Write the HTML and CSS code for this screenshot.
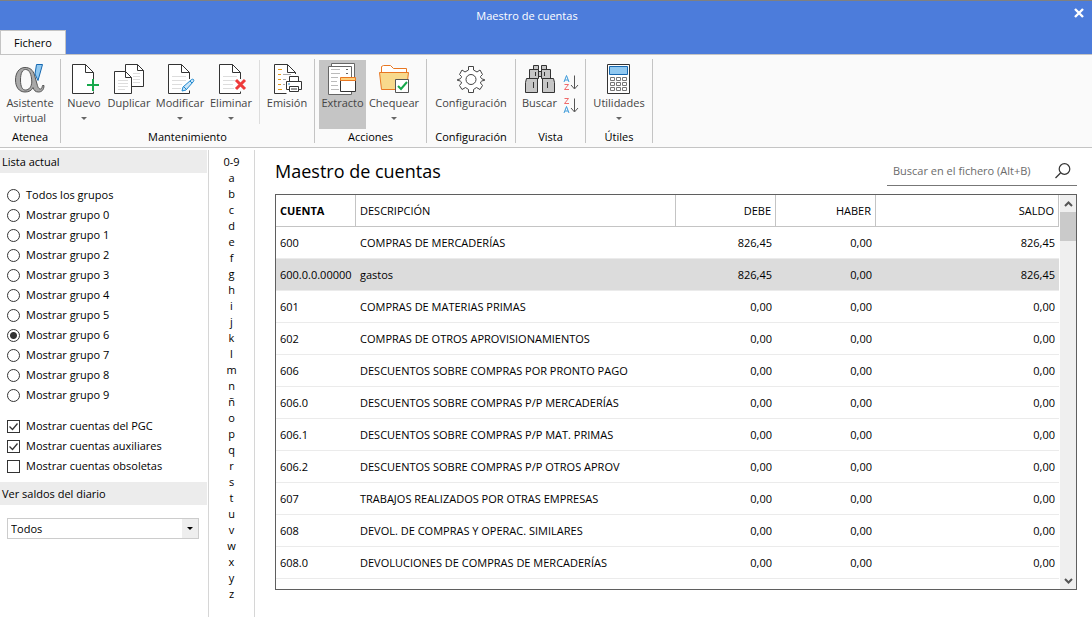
FILE: index.html
```html
<!DOCTYPE html>
<html lang="es">
<head>
<meta charset="utf-8">
<title>Maestro de cuentas</title>
<meta name="viewport" content="width=device-width, initial-scale=1">
<link rel="stylesheet" href="styles.css">
</head>
<body>
<header class="titlebar">
  <div class="caption">Maestro de cuentas</div>
  <button class="close" aria-label="Cerrar"><svg width="10" height="10" viewBox="0 0 10 10"><path d="M1 1L9 9M9 1L1 9" stroke="#fff" stroke-width="2.4"/></svg></button>
  <button class="tab">Fichero</button>
</header>

<nav class="ribbon">
  <section class="group group-atenea">
    <div class="tools">
      <button class="tool">
        <svg width="34" height="33" viewBox="0 0 34 33"><path fill-rule="evenodd" d="M12 5.500C17 5.500 20 8 21.500 13L24 22C25 26 26 27 27.500 27S29 25 29.500 23.500H31C31 28 28.500 30 25.500 30C22.500 30 21 28.500 20 25.500C18.500 28.500 16 30 12 30C6 30 2.500 25 2.500 18S6 5.500 12 5.500zM12.500 7.500C9.500 7.500 7.500 11 7.500 18S9.500 28 12.500 28C16 28 18.500 25 18.800 20C18.500 12 16.500 7.500 12.500 7.500z" fill="#a9a9a9" stroke="#555"/><path d="M23.500 2.500h6L25 18.500L22 12z" fill="#90c8f0" stroke="#1668b0"/></svg>
        <span>Asistente<br>virtual</span>
      </button>
    </div>
    <h2>Atenea</h2>
  </section>

  <section class="group group-mantenimiento">
    <div class="tools">
      <button class="tool">
        <svg width="34" height="33" viewBox="0 0 34 33"><path d="M5.500 2.500h13l8 8v21h-21z" fill="#fff"/><path d="M26.500 19v-8.500l-8-8h-13v29h21v-2M18.500 2.500v8h8" fill="none" stroke="#333"/><path d="M26 17v12M20 23h12" stroke="#17a84b" stroke-width="2"/></svg>
        <span>Nuevo</span><i class="caret"></i>
      </button>
      <button class="tool">
        <svg width="34" height="33" viewBox="0 0 34 33"><path d="M13.500 2.500h12l6 6v16h-18z" fill="#fff" stroke="#333"/><path d="M25.500 2.500v6h6" fill="none" stroke="#333"/><path d="M21 11.500h7M21 14.500h7M21 17.500h7M21 20.500h7" stroke="#ddd"/><path d="M2.500 9.500h11l6 6v16h-17z" fill="#fff" stroke="#333"/><path d="M13.500 9.500v6h6" fill="none" stroke="#333"/><path d="M6 18.500h10M6 21.500h10M6 24.500h10M6 27.500h7" stroke="#ddd"/></svg>
        <span>Duplicar</span>
      </button>
      <button class="tool">
        <svg width="34" height="33" viewBox="0 0 34 33"><path d="M5.500 2.500h13l8 8v21h-21z" fill="#fff"/><path d="M26.500 17v-6.500l-8-8h-13v29h21v-3M18.500 2.500v8h8" fill="none" stroke="#333"/><path d="M9 14.500h14M9 18.500h14M9 22.500h10M9 26.500h9" stroke="#ddd"/><path d="M20 25l8-7c2-2 4 0 2 2l-7 8-4 1z" fill="#cce6f8" stroke="#1d87cf"/><path d="M27 19l2 2M21 25l2 2" stroke="#1d87cf"/></svg>
        <span>Modificar</span><i class="caret"></i>
      </button>
      <button class="tool">
        <svg width="34" height="33" viewBox="0 0 34 33"><path d="M5.500 2.500h13l8 8v21h-21z" fill="#fff"/><path d="M26.500 17v-6.500l-8-8h-13v29h21v-2M18.500 2.500v8h8" fill="none" stroke="#333"/><path d="M9 14.500h14M9 18.500h12M9 22.500h10M9 26.500h11" stroke="#ddd"/><path d="M22 18l9 9M31 18l-9 9" stroke="#ee3a3a" stroke-width="3"/></svg>
        <span>Eliminar</span><i class="caret"></i>
      </button>
      <button class="tool split">
        <svg width="34" height="33" viewBox="0 0 34 33"><path d="M4.500 2.500h13l8 8v21h-21z" fill="#fff"/><path d="M25.500 12v-1.500l-8-8h-13v29h12M17.500 2.500v8h8" fill="none" stroke="#333"/><path d="M8 7.500h4M8 12.500h3M8 17.500h3M8 22.500h3M8 27.500h4" stroke="#e59a19"/><path d="M13 12.500h8M13 17.500h3M13 22.500h2" stroke="#aaa"/><path d="M19.500 19v-4.500h9V19M19.500 27.500h-3v-8h15v8h-3" fill="#fff" stroke="#333"/><path d="M19.500 24.500h9v5h-9zM21 27h6" fill="#fff" stroke="#333"/><path d="M18 22h2" stroke="#1d87cf"/></svg>
        <span>Emisión</span>
      </button>
    </div>
    <h2>Mantenimiento</h2>
  </section>

  <section class="group group-acciones">
    <div class="tools">
      <button class="tool active">
        <svg width="34" height="33" viewBox="0 0 34 33"><path d="M5.500 1.500h23v27h-23z" fill="#fff" stroke="#666"/><path d="M2.500 4.500h23v28h-23z" fill="#fff" stroke="#666"/><path d="M5 7.500h9M5 11.500h9M5 15.500h7M5 19.500h6M5 23.500h7M5 27.500h8" stroke="#bbb"/><path d="M20 7.500h2M20 11.500h2" stroke="#666"/><path d="M14.500 18.500h15v11h-15z" fill="#fff" stroke="#333"/><path d="M14.500 15.500h15v3h-15z" fill="#ffd07a" stroke="#e87722"/></svg>
        <span>Extracto</span>
      </button>
      <button class="tool">
        <svg width="34" height="33" viewBox="0 0 34 33"><path d="M4.500 10V4.500l2-1h7l3 3h13V10" fill="#fff" stroke="#e87722"/><path d="M2.500 10.500h29l-2 17h-25z" fill="#f8d98c" stroke="#e87722"/><path d="M18.500 17.500h13v13h-13z" fill="#fff" stroke="#555"/><path d="M21 24l3 3 6-7" fill="none" stroke="#17a84b" stroke-width="2"/></svg>
        <span>Chequear</span><i class="caret"></i>
      </button>
    </div>
    <h2>Acciones</h2>
  </section>

  <section class="group group-configuracion">
    <div class="tools">
      <button class="tool">
        <svg width="34" height="33" viewBox="0 0 34 33"><path d="M14.500 8L14.500 4.500H19.500V8L23 10L26 8L28.500 12.500L26.500 14.500C26.500 16.500 28.500 17.500 30.500 17.500V18.500C28.500 18.500 26.500 19 26.500 21L28.500 23.500L26 27.500L22.500 25.500L19.500 27.500V30.500H14.500V27.500L11.500 25.500L8 27.500L5.500 23.500L7.500 21C7.500 19 5.500 18.500 3.500 18.500V17.500C5.500 17.500 7.500 16.500 7.500 14.500L5.500 12.500L8 8L11 10z" fill="#fff" stroke="#444" stroke-linejoin="round"/><circle cx="17" cy="17.500" r="5" fill="none" stroke="#444"/></svg>
        <span>Configuración</span>
      </button>
    </div>
    <h2>Configuración</h2>
  </section>

  <section class="group group-vista">
    <div class="tools">
      <button class="tool">
        <svg width="34" height="33" viewBox="0 0 34 33"><g fill="#c6c6c6" stroke="#333"><path d="M10.500 3.500h5v4h-5zM18.500 3.500h5v4h-5zM6.500 7.500h9v9h-9zM18.500 7.500h9v9h-9zM15.500 9.500h3v5h-3z"/><path d="M3.500 16.500h11v14h-12v-10zM19.500 16.500h11l1 4v10h-12z"/></g><path d="M12.500 10v4M21.500 10v4M10.500 20v6M24.500 20v6" stroke="#333"/></svg>
        <span>Buscar</span>
      </button>
      <div class="sorts">
        <button class="sort" aria-label="Orden ascendente"><svg width="16" height="18" viewBox="0 0 16 18"><path d="M1 8l2.500-6.500L6 8M2 6h3" fill="none" stroke="#3c9ada"/><path d="M1.500 10.500h4l-4 5h4.500" fill="none" stroke="#f06b6b"/><path d="M11.500 1.500v13M8 11l3.500 4L15 11" fill="none" stroke="#555"/></svg></button>
        <button class="sort" aria-label="Orden descendente"><svg width="16" height="18" viewBox="0 0 16 18"><path d="M1.500 1.500h4l-4 5h4.500" fill="none" stroke="#f06b6b"/><path d="M1 16l2.500-6.500L6 16M2 14h3" fill="none" stroke="#3c9ada"/><path d="M11.500 1.500v13M8 11l3.500 4L15 11" fill="none" stroke="#555"/></svg></button>
      </div>
    </div>
    <h2>Vista</h2>
  </section>

  <section class="group group-utiles">
    <div class="tools">
      <button class="tool">
        <svg width="34" height="33" viewBox="0 0 34 33"><path d="M5.500 2.500h22v29h-22z" fill="#fff" stroke="#333"/><path d="M7.500 4.500h18v8h-18z" fill="#90c8f0" stroke="#1668b0"/><path d="M8.500 15.500h4v3h-4zM14.500 15.500h4v3h-4zM20.500 15.500h4v3h-4zM8.500 20.500h4v3h-4zM14.500 20.500h4v3h-4zM20.500 20.500h4v3h-4zM8.500 25.500h4v3h-4zM14.500 25.500h4v3h-4zM20.500 25.500h4v3h-4z" fill="#fff" stroke="#777"/></svg>
        <span>Utilidades</span><i class="caret"></i>
      </button>
    </div>
    <h2>Útiles</h2>
  </section>
</nav>

<div class="workspace">
  <aside class="sidebar">
    <h3>Lista actual</h3>
    <div class="options">
      <label><input type="radio" name="grupo">Todos los grupos</label>
      <label><input type="radio" name="grupo">Mostrar grupo 0</label>
      <label><input type="radio" name="grupo">Mostrar grupo 1</label>
      <label><input type="radio" name="grupo">Mostrar grupo 2</label>
      <label><input type="radio" name="grupo">Mostrar grupo 3</label>
      <label><input type="radio" name="grupo">Mostrar grupo 4</label>
      <label><input type="radio" name="grupo">Mostrar grupo 5</label>
      <label><input type="radio" name="grupo" checked>Mostrar grupo 6</label>
      <label><input type="radio" name="grupo">Mostrar grupo 7</label>
      <label><input type="radio" name="grupo">Mostrar grupo 8</label>
      <label><input type="radio" name="grupo">Mostrar grupo 9</label>
    </div>
    <div class="options checks">
      <label><span class="check"><input type="checkbox" checked><svg width="13" height="13" viewBox="0 0 13 13"><path d="M2.500 6.500l3 3 5-6" fill="none" stroke="#333" stroke-width="1.300"/></svg></span>Mostrar cuentas del PGC</label>
      <label><span class="check"><input type="checkbox" checked><svg width="13" height="13" viewBox="0 0 13 13"><path d="M2.500 6.500l3 3 5-6" fill="none" stroke="#333" stroke-width="1.300"/></svg></span>Mostrar cuentas auxiliares</label>
      <label><span class="check"><input type="checkbox"><svg width="13" height="13" viewBox="0 0 13 13"><path d="M2.500 6.500l3 3 5-6" fill="none" stroke="#333" stroke-width="1.300"/></svg></span>Mostrar cuentas obsoletas</label>
    </div>
    <h3><label for="diario">Ver saldos del diario</label></h3>
    <div class="combo">
      <select id="diario"><option>Todos</option></select>
      <span class="combo-arrow"></span>
    </div>
  </aside>

  <nav class="letters" aria-label="Índice alfabético">
    <button>0-9</button><button>a</button><button>b</button><button>c</button><button>d</button><button>e</button><button>f</button><button>g</button><button>h</button><button>i</button><button>j</button><button>k</button><button>l</button><button>m</button><button>n</button><button>ñ</button><button>o</button><button>p</button><button>q</button><button>r</button><button>s</button><button>t</button><button>u</button><button>v</button><button>w</button><button>x</button><button>y</button><button>z</button>
  </nav>

  <main class="content">
    <div class="heading">
      <h1>Maestro de cuentas</h1>
      <div class="search">
        <input type="text" placeholder="Buscar en el fichero (Alt+B)" aria-label="Buscar en el fichero">
        <button aria-label="Buscar"><svg width="16" height="16" viewBox="0 0 16 16"><circle cx="9.500" cy="6" r="5.300" fill="none" stroke="#333" stroke-width="1.200"/><path d="M5.500 10L.5 15" stroke="#333" stroke-width="1.300"/></svg></button>
      </div>
    </div>
    <div class="grid">
      <div class="rows">
        <table>
          <colgroup><col class="c-cuenta"><col class="c-desc"><col class="c-num"><col class="c-num"><col></colgroup>
          <thead><tr><th class="sorted">CUENTA</th><th>DESCRIPCIÓN</th><th>DEBE</th><th>HABER</th><th>SALDO</th></tr></thead>
          <tbody>
            <tr><td>600</td><td>COMPRAS DE MERCADERÍAS</td><td>826,45</td><td>0,00</td><td>826,45</td></tr>
            <tr class="selected"><td>600.0.0.00000</td><td>gastos</td><td>826,45</td><td>0,00</td><td>826,45</td></tr>
            <tr><td>601</td><td>COMPRAS DE MATERIAS PRIMAS</td><td>0,00</td><td>0,00</td><td>0,00</td></tr>
            <tr><td>602</td><td>COMPRAS DE OTROS APROVISIONAMIENTOS</td><td>0,00</td><td>0,00</td><td>0,00</td></tr>
            <tr><td>606</td><td>DESCUENTOS SOBRE COMPRAS POR PRONTO PAGO</td><td>0,00</td><td>0,00</td><td>0,00</td></tr>
            <tr><td>606.0</td><td>DESCUENTOS SOBRE COMPRAS P/P MERCADERÍAS</td><td>0,00</td><td>0,00</td><td>0,00</td></tr>
            <tr><td>606.1</td><td>DESCUENTOS SOBRE COMPRAS P/P MAT. PRIMAS</td><td>0,00</td><td>0,00</td><td>0,00</td></tr>
            <tr><td>606.2</td><td>DESCUENTOS SOBRE COMPRAS P/P OTROS APROV</td><td>0,00</td><td>0,00</td><td>0,00</td></tr>
            <tr><td>607</td><td>TRABAJOS REALIZADOS POR OTRAS EMPRESAS</td><td>0,00</td><td>0,00</td><td>0,00</td></tr>
            <tr><td>608</td><td>DEVOL. DE COMPRAS Y OPERAC. SIMILARES</td><td>0,00</td><td>0,00</td><td>0,00</td></tr>
            <tr><td>608.0</td><td>DEVOLUCIONES DE COMPRAS DE MERCADERÍAS</td><td>0,00</td><td>0,00</td><td>0,00</td></tr>
          </tbody>
        </table>
      </div>
      <div class="scrollbar">
        <button aria-label="Subir"><svg width="9" height="6" viewBox="0 0 9 6"><path d="M1 5l3.500-3.500L8 5" fill="none" stroke="#555" stroke-width="2"/></svg></button>
        <div class="thumb"></div>
        <button class="down" aria-label="Bajar"><svg width="9" height="6" viewBox="0 0 9 6"><path d="M1 1l3.500 3.500L8 1" fill="none" stroke="#555" stroke-width="2"/></svg></button>
      </div>
    </div>
  </main>
</div>
</body>
</html>
```
FILE: styles.css
```css
* { box-sizing: border-box; }
body {
  margin: 0;
  height: 100vh;
  display: flex;
  flex-direction: column;
  overflow: hidden;
  background: #fff;
  color: #000;
  font: 11px/16px "Open Sans", "Noto Sans", sans-serif;
}
button, input, select { font: inherit; color: inherit; }
button { border: 0; padding: 0; background: none; }
h1, h2, h3 { margin: 0; font-weight: 400; }
h2, h3 { font-size: 11px; }
svg { display: block; flex: none; }

/* Title bar */
.titlebar {
  display: grid;
  grid-template-columns: 66px 1fr 66px;
  grid-template-rows: 29px 24px;
  border-top: 1px solid #808080;
  background: #4c7cdb;
}
.caption { grid-column: 2; padding-right: 38px; color: #fff; text-align: center; line-height: 30px; }
.close { grid-column: 3; justify-self: end; align-self: start; padding: 7px 8px; }
.tab {
  grid-row: 2;
  grid-column: 1;
  background: #fafafa;
  border: 1px solid #c4c4c4;
  border-bottom: 0;
}

/* Ribbon */
.ribbon {
  display: flex;
  height: 94px;
  padding: 4px 0;
  background: #fafafa;
  border-top: 1px solid #c4c4c4;
  border-bottom: 1px solid #c4c4c4;
}
.group { display: flex; flex-direction: column; border-right: 1px solid #c4c4c4; }
.group h2 { text-align: center; line-height: 12px; }
.tools { display: flex; flex: 1; padding-top: 1px; }
.tool {
  display: flex;
  flex-direction: column;
  align-items: center;
  flex: 1;
  height: 69px;
  padding-top: 2px;
  color: #444;
  line-height: 15px;
  white-space: nowrap;
}
.tool.active { background: #c5c5c5; }
.caret { margin-top: 7px; border: 3px solid transparent; border-top-color: #666; border-bottom: 0; }
.group-atenea { width: 61px; }
.group-mantenimiento { width: 254px; }
.group-mantenimiento .tools { display: grid; grid-template-columns: 46px 44px 58px 44px 1fr; }
.tool.split { height: 64px; margin-left: 6px; border-left: 1px solid #ddd; }
.group-acciones { width: 112px; }
.group-acciones .tools { padding-left: 4px; padding-right: 4px; }
.group-acciones .active { flex: 0 0 47px; }
.group-configuracion { width: 89px; }
.group-vista { width: 70px; }
.group-vista .tools { padding-right: 6px; }
.group-utiles { width: 67px; }
.sorts { display: flex; flex-direction: column; gap: 5px; padding-top: 14px; }

/* Side panel */
.workspace { display: flex; flex: 1; min-height: 0; padding-top: 2px; }
.sidebar { flex: none; width: 209px; padding-right: 1px; border-right: 1px solid #d6d6d6; }
.sidebar h3 { padding-left: 2px; background: #ececec; line-height: 23px; }
.options { padding: 12px 7px 0; }
.options.checks { padding-top: 11px; padding-bottom: 6px; }
.options label { display: flex; align-items: center; gap: 6px; height: 20px; }
.options input {
  appearance: none;
  flex: none;
  width: 13px;
  height: 13px;
  margin: 0;
  border: 1px solid #333;
  background: #fff;
}
.options input[type="radio"] { border-radius: 50%; }
.options input[type="radio"]:checked { background: radial-gradient(circle, #333 0 3px, #fff 4px); }
.check { display: grid; }
.check > * { grid-area: 1 / 1; }
.check svg { visibility: hidden; z-index: 1; pointer-events: none; }
.check input:checked + svg { visibility: visible; }
.combo { display: grid; grid-template-columns: 1fr 16px; margin: 13px 8px 0 7px; border: 1px solid #ccc; }
.combo select {
  grid-area: 1 / 1 / 2 / 3;
  appearance: none;
  height: 19px;
  padding: 0 3px;
  border: 0;
  border-radius: 0;
  background: #fff;
}
.combo-arrow { grid-area: 1 / 2; display: grid; place-items: center; background: #eee; z-index: 1; pointer-events: none; }
.combo-arrow::before { content: ""; border: 3px solid transparent; border-top-color: #000; border-bottom: 0; }

/* Alphabetical index */
.letters { display: flex; flex-direction: column; flex: none; width: 46px; padding-top: 4px; border-right: 1px solid #d6d6d6; }
.letters button { height: 16px; line-height: 16px; }

/* Accounts */
.content { display: flex; flex: 1; flex-direction: column; min-width: 0; padding: 0 15px 27px 20px; }
.heading { display: flex; justify-content: space-between; align-items: flex-start; height: 44px; }
h1 { font-size: 18px; line-height: 43px; }
.search { display: flex; align-items: center; width: 190px; height: 36px; padding: 6px 6px 0; border-bottom: 1px solid #777; }
.search input { flex: 1; min-width: 0; padding: 0; border: 0; outline: 0; }
.search input::placeholder { color: #6b6b6b; opacity: 1; }
.grid { display: flex; flex: 1; min-height: 0; border: 1px solid #5f5f5f; }
.rows { flex: 1; min-width: 0; overflow: hidden; }
table { width: 100%; table-layout: fixed; border-collapse: separate; border-spacing: 0; font-size: 11px; }
.c-cuenta { width: 80px; }
.c-desc { width: 320px; }
.c-num { width: 100px; }
th, td { height: 32px; padding: 0 4px; border-bottom: 1px solid #ebebeb; text-align: left; white-space: nowrap; }
th { font-weight: 400; border-right: 1px solid #c4c4c4; border-bottom-color: #c4c4c4; }
th.sorted { font-weight: 700; }
th:nth-child(n+3), td:nth-child(n+3) { text-align: right; }
.selected td { background: #dcdcdc; }
.scrollbar { display: flex; flex-direction: column; width: 17px; border-left: 1px solid #fff; background: #efefef; }
.scrollbar button { display: grid; place-items: center; height: 17px; }
.thumb { height: 29px; background: #cacaca; }
.scrollbar .down { margin-top: auto; }
```
